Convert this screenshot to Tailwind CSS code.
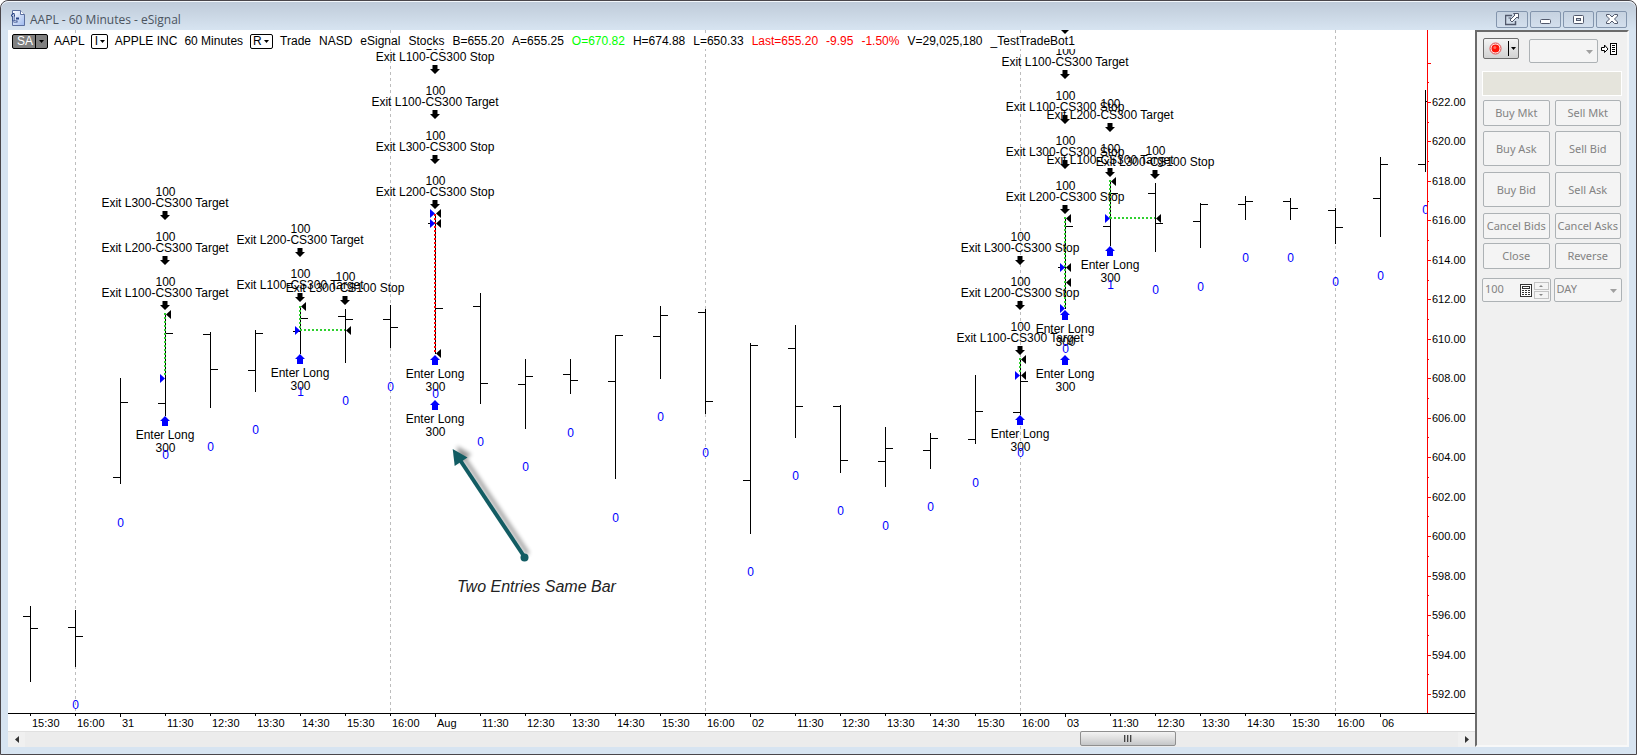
<!DOCTYPE html>
<html lang="en">
<head>
<meta charset="utf-8">
<title>AAPL - 60 Minutes - eSignal</title>
<script src="https://cdn.jsdelivr.net/npm/@tailwindcss/browser@4"></script>
</head>
<body class="bg-white">
<div class="flex h-screen flex-col overflow-hidden rounded-t-lg border border-[#4a464a] bg-[#d7e4f1] px-[7px] pb-[7px] font-['Liberation_Sans',Arial,sans-serif]">

  <header class="-mx-[7px] flex h-[29px] shrink-0 items-center gap-[4px] rounded-t-lg border-t border-white/70 bg-linear-to-b from-[#bfcbd9] to-[#d7e4f1] pr-[9px] pl-[9px]">
    <svg class="mt-[4px] size-[16px] shrink-0" viewBox="0 0 16 16" aria-hidden="true">
      <defs><linearGradient id="doc" x2="1" y2="1"><stop offset="0" stop-color="#fff"/><stop offset="1" stop-color="#9db9ee"/></linearGradient></defs>
      <path d="M2.500.5H10.500L14.500 4.500V15.500H2.500Z" fill="url(#doc)" stroke="#5b6f9f"/>
      <path d="M10.500.5V4.500H14.500" fill="#fff" stroke="#5b6f9f"/>
      <path d="M1 5.500H5M3.500 3V11M3.500 11.500H7.500M6 8.500H9" fill="none" stroke="#2b4585" stroke-width="2"/>
      <path d="M3.500 4V10.500M2 5.500H3.500M4 11.500H6.500" fill="none" stroke="#dfe8fa" stroke-width=".7"/>
    </svg>
    <h1 class="flex-1 pt-[7px] text-[12px] leading-4 whitespace-nowrap text-[#4b545f] font-['Open_Sans',sans-serif]">AAPL - 60 Minutes - eSignal</h1>
    <div class="flex gap-[2px] pt-[6px]">
      <button aria-label="Detach" class="flex h-[17px] w-[32px] items-center justify-center rounded-xs border border-[#8395ad] bg-linear-to-b from-[#c6d2e0] to-[#d3dfed]">
        <svg class="h-[13px] w-[14px]" viewBox="0 0 14 13" fill="#fff" stroke="#51586b"><path d="M7 2.500H.5V11.500H10.500V8" fill="none" stroke-width="1.500"/><path d="M3.500 5H6V7.500H8" fill="none"/><path d="M8.500.5H13.500V5.500L12 4 7 9 5 7 10 2Z"/></svg>
      </button>
      <button aria-label="Minimize" class="flex h-[17px] w-[31px] items-center justify-center rounded-xs border border-[#8395ad] bg-linear-to-b from-[#c6d2e0] to-[#d3dfed]">
        <svg class="mt-[4px] h-[5px] w-[11px]" viewBox="0 0 11 5"><rect x=".5" y=".5" width="10" height="4" rx="1" fill="#fff" stroke="#51586b"/></svg>
      </button>
      <button aria-label="Maximize" class="flex h-[17px] w-[31px] items-center justify-center rounded-xs border border-[#8395ad] bg-linear-to-b from-[#c6d2e0] to-[#d3dfed]">
        <svg class="h-[9px] w-[11px]" viewBox="0 0 11 9" stroke="#51586b"><rect x=".5" y=".5" width="10" height="8" rx="1" fill="#fff"/><rect x="3.500" y="3.500" width="4" height="2" fill="#c6d2e0"/></svg>
      </button>
      <button aria-label="Close" class="flex h-[17px] w-[31px] items-center justify-center rounded-xs border border-[#8395ad] bg-linear-to-b from-[#c6d2e0] to-[#d3dfed]">
        <svg class="h-[10px] w-[12px]" viewBox="0 0 12 10"><path d="M.5.5H3.500L6 3 8.500.5H11.500V2L8.500 5 11.500 8V9.500H8.500L6 7 3.500 9.500H.5V8L3.500 5 .5 2Z" fill="#fff" stroke="#51586b"/></svg>
      </button>
    </div>
  </header>

  <div class="flex min-h-0 flex-1">
    <main class="flex min-w-0 flex-1 flex-col bg-white">
      <div class="flex min-h-0 flex-1">
        <section class="relative min-w-0 flex-1 overflow-hidden" aria-label="Price chart">
          <svg id="plot" class="block h-full w-full text-[12px]"></svg>
          <div class="absolute top-[4px] left-[4px] flex h-[15px] items-center gap-[7px] bg-white text-[12px] leading-[17px] whitespace-nowrap text-black">
            <div class="flex items-center gap-[6px]">
              <button class="flex h-[15px] w-[36px] items-center rounded-xs border border-black bg-[#808080] text-white">
                <span class="w-[23px] border-r border-black pl-[2px] leading-[15px]">SA</span>
                <svg class="mx-auto h-[3px] w-[5px]" viewBox="0 0 5 3" fill="#000"><path d="M0 0H5L2.500 3Z"/></svg>
              </button>
              <span>AAPL</span>
              <button class="flex h-[15px] w-[17px] items-center rounded-xs border border-black bg-white pl-[3px]">I
                <svg class="mx-auto h-[3px] w-[5px]" viewBox="0 0 5 3" fill="#000"><path d="M0 0H5L2.500 3Z"/></svg>
              </button>
            </div>
            <span>APPLE INC</span><span>60 Minutes</span>
            <button class="flex h-[15px] w-[23px] items-center rounded-xs border border-black bg-white pl-[2px]">R
              <svg class="mx-auto h-[3px] w-[5px]" viewBox="0 0 5 3" fill="#000"><path d="M0 0H5L2.500 3Z"/></svg>
            </button>
            <div class="flex gap-[8px]">
              <span>Trade</span><span>NASD</span><span>eSignal</span><span>Stocks</span><span>B=655.20</span><span>A=655.25</span>
              <span class="text-[#00ff00]">O=670.82</span><span>H=674.88</span><span>L=650.33</span>
              <span class="text-[#ff0000]">Last=655.20</span><span class="text-[#ff0000]">-9.95</span><span class="text-[#ff0000]">-1.50%</span>
              <span>V=29,025,180</span><span>_TestTradeBot1</span>
            </div>
          </div>
        </section>
        <svg id="prices" class="block h-full w-[48px] shrink-0 text-[11px]" aria-label="Price axis"></svg>
      </div>
      <svg id="times" class="block h-[18px] w-full shrink-0 text-[11px]" aria-label="Time axis"></svg>
      <div class="flex h-[16px] shrink-0 border-t border-[#e0e0e0] bg-[#ececec]">
        <button aria-label="Scroll left" class="flex w-[17px] items-center justify-center bg-[#f0f0f0]"><svg class="h-[7px] w-[4px]" viewBox="0 0 4 7" fill="#333"><path d="M4 0V7L0 3.500Z"/></svg></button>
        <div class="grow-[1055]"></div>
        <button aria-label="Scroll position" class="-mt-px flex h-[15px] w-[96px] items-center justify-center gap-[1px] rounded-xs border border-[#8f8f8f] bg-linear-to-b from-[#f3f3f3] via-[#dedede] to-[#c4c6c8]">
          <span class="h-[7px] w-[2px] border-l border-[#444] bg-[#aaa]"></span><span class="h-[7px] w-[2px] border-l border-[#444] bg-[#aaa]"></span><span class="h-[7px] w-[2px] border-l border-[#444] bg-[#aaa]"></span>
        </button>
        <div class="grow-[282]"></div>
        <button aria-label="Scroll right" class="flex w-[17px] items-center justify-center bg-[#f0f0f0]"><svg class="h-[7px] w-[4px]" viewBox="0 0 4 7" fill="#333"><path d="M0 0V7L4 3.500Z"/></svg></button>
      </div>
    </main>

    <aside class="flex w-[154px] shrink-0 flex-col border-t-2 border-r-2 border-b-2 border-l-2 border-t-[#6b6b6b] border-r-[#f8f8f8] border-b-[#f8f8f8] border-l-[#6b6b6b] bg-[#f0f0f0] px-[5px] pt-[6px] text-[11px] leading-[14px] text-[#838383] font-['Noto_Sans',sans-serif]">
      <div class="flex h-[33px] items-start pl-px">
        <button aria-label="Record" class="flex h-[21px] w-[36px] items-center rounded-xs border border-[#6e6e6e] bg-linear-to-b from-[#f4f4f4] to-[#d2d2d2] pl-[5px]">
          <svg class="size-[13px]" viewBox="0 0 13 13"><circle cx="6.500" cy="6.500" r="5.500" fill="#fff" stroke="#e04040"/><circle cx="6.500" cy="6.500" r="4" fill="#ff1408"/><circle cx="5.800" cy="5.500" r="1.500" fill="#ff6b5c"/></svg>
          <span class="ml-[6px] h-[15px] w-px bg-black"></span>
          <svg class="mx-auto h-[3px] w-[5px]" viewBox="0 0 5 3" fill="#000"><path d="M0 0H5L2.500 3Z"/></svg>
        </button>
        <div class="relative mt-px ml-[10px]">
          <select aria-label="Account" disabled class="block h-[24px] w-[69px] appearance-none rounded-xs border border-[#adb2b5] bg-[#f4f4f4]"><option></option></select>
          <svg class="pointer-events-none absolute top-[11px] right-[5px] h-[4px] w-[7px]" viewBox="0 0 7 4" fill="#a0a0a0"><path d="M0 0H7L3.500 4Z"/></svg>
        </div>
        <button aria-label="Toggle panel" class="mt-[5px] ml-[3px]"><svg class="h-[12px] w-[17px]" viewBox="0 0 17 12" fill="none" stroke="#000"><path d="M.5 4.500H3.500V2L7 6 3.500 9.500V7.500H.5Z" fill="#fff"/><rect x="9.500" y=".5" width="6" height="11" fill="#fff"/><path d="M11 2.500H14M11 4.500H14M11 6.500H14M11 8.500H14"/></svg></button>
      </div>
      <div class="h-[25px] border border-white bg-[#e5e4dc]"></div>
      <div class="mt-[4px] grid grid-cols-2 gap-x-[5px] px-px">
        <button disabled class="mb-[5px] h-[26px] rounded-xs border border-[#adb2b5] bg-[#f4f4f4] whitespace-nowrap">Buy Mkt</button>
        <button disabled class="mb-[5px] h-[26px] rounded-xs border border-[#adb2b5] bg-[#f4f4f4] whitespace-nowrap">Sell Mkt</button>
        <button disabled class="mb-[6px] h-[35px] rounded-xs border border-[#adb2b5] bg-[#f4f4f4] whitespace-nowrap">Buy Ask</button>
        <button disabled class="mb-[6px] h-[35px] rounded-xs border border-[#adb2b5] bg-[#f4f4f4] whitespace-nowrap">Sell Bid</button>
        <button disabled class="mb-[6px] h-[35px] rounded-xs border border-[#adb2b5] bg-[#f4f4f4] whitespace-nowrap">Buy Bid</button>
        <button disabled class="mb-[6px] h-[35px] rounded-xs border border-[#adb2b5] bg-[#f4f4f4] whitespace-nowrap">Sell Ask</button>
        <button disabled class="mb-[4px] h-[26px] rounded-xs border border-[#adb2b5] bg-[#f4f4f4] whitespace-nowrap">Cancel Bids</button>
        <button disabled class="mb-[4px] h-[26px] rounded-xs border border-[#adb2b5] bg-[#f4f4f4] whitespace-nowrap">Cancel Asks</button>
        <button disabled class="h-[26px] rounded-xs border border-[#adb2b5] bg-[#f4f4f4] whitespace-nowrap">Close</button>
        <button disabled class="h-[26px] rounded-xs border border-[#adb2b5] bg-[#f4f4f4] whitespace-nowrap">Reverse</button>
      </div>
      <div class="mt-[9px] grid grid-cols-2 gap-x-[3px]">
        <div class="flex h-[24px] items-center rounded-xs border border-[#adb2b5] bg-[#f4f4f4] pr-px">
          <input aria-label="Quantity" type="text" value="100" disabled class="h-[20px] w-0 flex-1 pb-[3px] pl-[2px]">
          <svg class="mr-[2px] h-[13px] w-[12px]" viewBox="0 0 12 13" fill="none" stroke="#333"><rect x=".5" y=".5" width="11" height="12" fill="#fff"/><rect x="2.500" y="2.500" width="7" height="2"/><path d="M2 6.500H10M2 8.500H10M2 10.500H10" stroke-dasharray="2 1"/></svg>
          <div class="flex flex-col gap-px">
            <button aria-label="Increase" disabled class="flex h-[8px] w-[15px] items-center justify-center border border-[#c4c4c4]"><svg class="h-[2px] w-[4px]" viewBox="0 0 4 2" fill="#888"><path d="M0 2H4L2 0Z"/></svg></button>
            <button aria-label="Decrease" disabled class="flex h-[8px] w-[15px] items-center justify-center border border-[#c4c4c4]"><svg class="h-[2px] w-[4px]" viewBox="0 0 4 2" fill="#888"><path d="M0 0H4L2 2Z"/></svg></button>
          </div>
        </div>
        <div class="relative">
          <select aria-label="Time in force" disabled class="block h-[24px] w-full appearance-none rounded-xs border border-[#adb2b5] bg-[#f4f4f4] pb-[2px] pl-[2px]"><option>DAY</option></select>
          <svg class="pointer-events-none absolute top-[11px] right-[5px] h-[4px] w-[7px]" viewBox="0 0 7 4" fill="#a0a0a0"><path d="M0 0H7L3.500 4Z"/></svg>
        </div>
      </div>
    </aside>
  </div>
</div>

<script>
const STEP = 45, FIRST = 30;
const barX = i => FIRST + STEP * i;

// high, low, open, close, baseline of the position count, count
const bars = [
  [606,681,616,628], [610,666,627,636,709,0], [378,483,477,402,527,0], [313,415,403,333,459,0],
  [332,407,334,369,451,0], [330,391,370,333,434,0], [306,353,331,318,396,1], [309,362,316,319,405,0],
  [305,347,319,327,391,0], [214,353,223,308,398,0], [293,403,306,383,446,0], [359,428,384,376,471,0],
  [359,393,374,380,437,0], [335,478,381,335,522,0], [306,378,336,315,421,0], [309,413,312,401,457,0],
  [343,533,480,345,576,0], [325,437,348,406,480,0], [405,472,406,460,515,0], [427,486,461,448,530,0],
  [433,468,450,438,511,0], [375,443,439,411,487,0], [358,414,412,381,457,0], [217,308,267,226,353,0],
  [180,245,226,193,289,1], [183,251,193,223,294,0], [203,247,221,204,291,0], [196,219,204,201,262,0],
  [198,219,201,208,262,0], [208,243,210,227,286,0], [157,236,198,164,280,0], [90,171,164,101,214,0]
];
const exits = [
  [3,211,'L300-CS300 Target'], [3,256,'L200-CS300 Target'], [3,301,'L100-CS300 Target'],
  [6,248,'L200-CS300 Target'], [6,293,'L100-CS300 Target'], [7,296,'L300-CS100 Stop'],
  [9,65,'L100-CS300 Stop'], [9,110,'L100-CS300 Target'], [9,155,'L300-CS300 Stop'], [9,200,'L200-CS300 Stop'],
  [22,256,'L300-CS300 Stop'], [22,301,'L200-CS300 Stop'], [22,346,'L100-CS300 Target'],
  [23,25,''], [23,70,'L100-CS300 Target'], [23,115,'L100-CS300 Stop'], [23,160,'L300-CS300 Stop'], [23,205,'L200-CS300 Stop'],
  [24,123,'L200-CS300 Target'], [24,168,'L100-CS300 Target'], [25,170,'L300-CS100 Stop']
];
const entries = [[3,417],[6,355],[9,356],[9,401],[22,416],[23,311],[23,356],[24,247]];
const links = [
  [3,313,3,376,'#2fd02f'], [6,306,6,330,'#2fd02f'], [6,330,7,330,'#2fd02f'], [9,214,9,353,'#ff0000'],
  [22,358,22,373,'#2fd02f'], [23,217,23,308,'#2fd02f'], [24,180,24,218,'#2fd02f'], [24,218,25,218,'#2fd02f']
];
const exitMarks = [[3,314],[6,306],[7,330],[9,213],[9,223],[9,353],[22,359],[22,375],[23,218],[23,267],[23,282],[24,181],[25,218]];
const entryMarks = [[3,378],[6,330],[9,213],[9,223],[22,375],[23,267],[23,308],[24,218]];

const out = [];
for (let i = 1; i < 32; i += 7) out.push(`<path d="M${barX(i) + .5} 30V713" stroke="#bdbdbd" stroke-dasharray="3 3"/>`);
bars.forEach(([hi, lo, op, cl], i) => {
  const x = barX(i);
  out.push(`<path d="M${x + .5} ${hi}V${lo + 1}M${x - 7} ${op + .5}H${x}M${x} ${cl + .5}H${x + 8}" stroke="#000" fill="none"/>`);
});
links.forEach(([a, y1, b, y2, c]) => out.push(`<path d="M${barX(a)} ${y1}L${barX(b)} ${y2}" stroke="${c}" stroke-width="2" stroke-dasharray="2 2"/>`));
exitMarks.forEach(([i, y]) => out.push(`<path d="M${barX(i) + 1} ${y + .5}l5 -4.500v9z"/>`));
entryMarks.forEach(([i, y]) => out.push(`<path d="M${barX(i)} ${y + .5}l-5 -4.500v9z" fill="#00f"/>`));
exits.forEach(([i, y, t]) => {
  const x = barX(i);
  out.push(`<path d="M${x - 2.5} ${y}h5v4h2.500l-5 5l-5 -5h2.500z"/>`);
  if (t) out.push(`<text x="${x + .5}" y="${y - 15}">100</text><text x="${x}" y="${y - 4}">Exit ${t}</text>`);
});
entries.forEach(([i, y]) => {
  const x = barX(i);
  out.push(`<path d="M${x} ${y - 1}l5 5h-2v5h-6v-5h-2z" fill="#00f"/><text x="${x}" y="${y + 22}">Enter Long</text><text x="${x + .5}" y="${y + 35}">300</text>`);
});
bars.forEach((b, i) => { if (b.length > 4) out.push(`<text x="${barX(i) + .5}" y="${b[4]}" fill="#00f">${b[5]}</text>`); });
out.push(`
  <filter id="soft" x="-30%" y="-30%" width="160%" height="160%"><feGaussianBlur stdDeviation="2"/></filter>
  <g transform="translate(4 -3)" filter="url(#soft)" opacity=".4"><path d="M460 461L524 557" stroke="#000" stroke-width="4"/><path d="M453 449L467.500 457.500L454.700 466Z"/></g>
  <path d="M460 460L524.500 557" stroke="#125c63" stroke-width="4"/>
  <path d="M452.700 449L467.500 457.500L454.700 466Z" fill="#125c63"/><circle cx="524.500" cy="557.500" r="4" fill="#125c63"/>
  <text x="457" y="592" font-size="16" font-style="italic" text-anchor="start" fill="#222">Two Entries Same Bar</text>`);
document.getElementById('plot').innerHTML = `<g transform="translate(-8 -30)" text-anchor="middle">${out.join('')}</g>`;

let axis = '<path d="M.5 0V683" stroke="#f00"/>';
for (let p = 591; p <= 624; p++) {
  const y = Math.round(72 + (622 - p) * 19.733);
  if (y > 680) continue;
  const even = p % 2 === 0;
  axis += `<path d="M1 ${y + .5}H${even ? 4 : 2}" stroke="#f00"/>`;
  if (even && p < 624) axis += `<text x="5" y="${y + 4}">${p}.00</text>`;
}
document.getElementById('prices').innerHTML = axis;

const days = ['31', 'Aug', '02', '03', '06'];
const hours = ['11:30', '12:30', '13:30', '14:30', '15:30', '16:00'];
let time = '<path d="M0 .5H3000" stroke="#000"/>';
for (let i = 0; i <= 30; i++) {
  const k = (i + 5) % 7, x = barX(i) - 8;
  const label = k === 0 ? days[(i - 2) / 7] : hours[k - 1];
  time += `<path d="M${x + .5} 1V${k === 0 ? 4 : 3}" stroke="#000"/><text x="${x + 2}" y="14">${label}</text>`;
}
document.getElementById('times').innerHTML = time;
</script>
</body>
</html>
